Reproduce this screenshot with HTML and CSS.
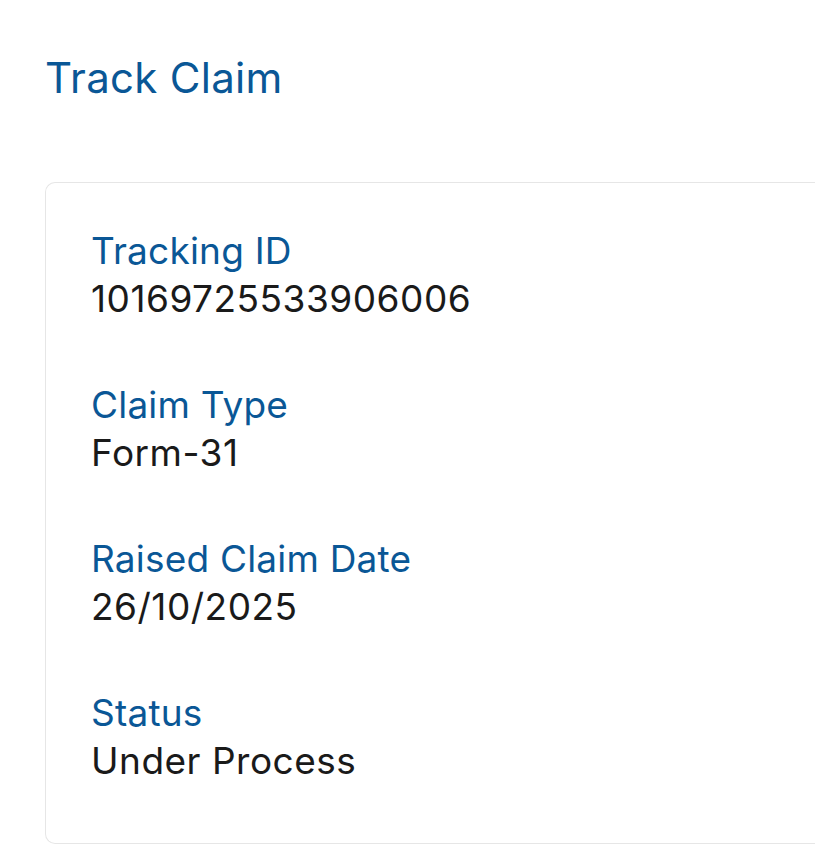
FILE: index.html
```html
<!DOCTYPE html>
<html>
<head>
<meta charset="utf-8">
<link rel="stylesheet" href="styles.css">
</head>
<body>
<main class="page">
  <h1 class="title">Track Claim</h1>
  <section class="card">
    <div class="field">
      <div class="label">Tracking ID</div>
      <div class="value">10169725533906006</div>
    </div>
    <div class="field">
      <div class="label">Claim Type</div>
      <div class="value">Form-31</div>
    </div>
    <div class="field">
      <div class="label">Raised Claim Date</div>
      <div class="value">26/10/2025</div>
    </div>
    <div class="field">
      <div class="label">Status</div>
      <div class="value">Under Process</div>
    </div>
  </section>
</main>
</body>
</html>
```
FILE: styles.css
```css
html, body {
  margin: 0;
  padding: 0;
  background: #ffffff;
}
body {
  font-family: "Inter", "Noto Sans", sans-serif;
  overflow: hidden;
}
.page {
  padding: 52px 0 0 45px;
}
.title {
  margin: 0;
  font-size: 42px;
  font-weight: 400;
  letter-spacing: 0.3px;
  line-height: 52px;
  color: #0a5796;
}
.card {
  margin-top: 78px;
  box-sizing: border-box;
  border: 1.5px solid #e6e6e6;
  border-right: none;
  border-radius: 10px 0 0 10px;
  padding: 44px 0 58px 45px;
  display: flex;
  flex-direction: column;
  gap: 58px;
}
.label {
  font-size: 37px;
  line-height: 48px;
  letter-spacing: 0.2px;
  color: #0a5796;
}
.value {
  font-size: 37px;
  line-height: 48px;
  letter-spacing: 0.5px;
  color: #1a1a1a;
}
```
